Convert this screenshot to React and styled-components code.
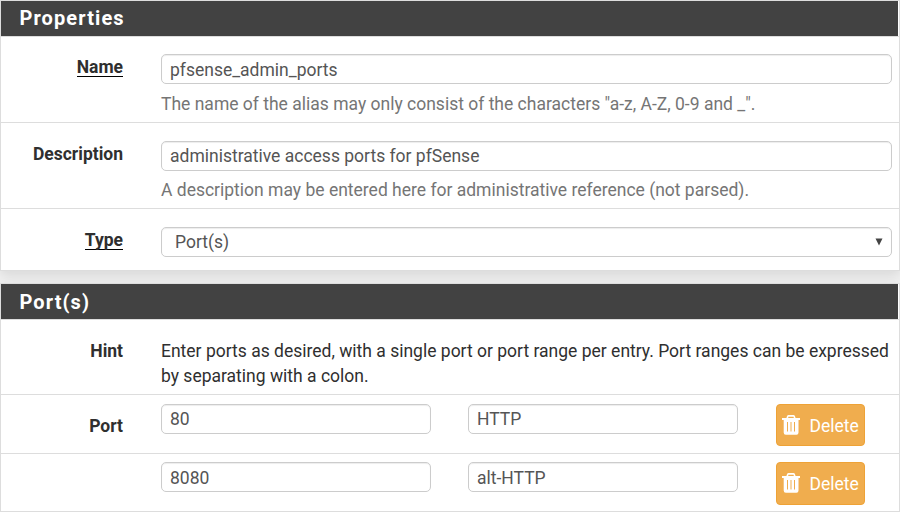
import React from "react";
import styled, { createGlobalStyle, css } from "styled-components";

const GlobalStyle = createGlobalStyle`
  *, *::before, *::after { box-sizing: border-box; }
  body {
    margin: 0;
    background: #f1f1f1;
    overflow: hidden;
    color: #2f2f2f;
    font: 400 17.5px/25px Roboto, sans-serif;
  }
`;

const Page = styled.main`
  display: flex;
  flex-direction: column;
  gap: 12px;
  width: 900px;
  height: 512px;
`;

const Panel = styled.section`
  border: 1px solid #ddd;
  background: #fff;
  box-shadow: 0 5px 12px rgba(0, 0, 0, 0.1);
`;

const PanelHeading = styled.h2`
  height: 35px;
  margin: 0 1px 0 0;
  padding-left: 18.5px;
  background: #424242;
  color: #fff;
  font-size: 20px;
  font-weight: 700;
  line-height: ${(p) => (p.$lowered ? 37 : 35)}px;
  letter-spacing: 1.1px;
`;

const Row = styled.div`
  display: grid;
  grid-template-columns: 122px 731px;
  column-gap: 38px;
  align-items: start;
  height: ${(p) => p.$height}px;
  padding-top: ${(p) => p.$top}px;
  border-top: 1px solid #ddd;
`;

const Label = styled.label`
  justify-self: end;
  margin-top: ${(p) => p.$offset ?? 1}px;
  font-weight: 700;
  line-height: 25px;
`;

const Required = styled.span`
  display: block;
  height: 22px;
  border-bottom: 1px solid #000;
`;

const fieldBox = css`
  display: block;
  width: 100%;
  height: 30px;
  border: 1px solid #ccc;
  border-radius: 5px;
  background: #fff;
  color: #555;
  box-shadow: inset 0 1px 1px rgba(0, 0, 0, 0.075);
  font: 400 17.5px/28px Roboto, sans-serif;
`;

const Input = styled.input`
  ${fieldBox}
  padding: ${(p) => (p.$raised ? 0 : 2)}px 8px 0;
  outline: none;
`;

const SelectBox = styled.div`
  ${fieldBox}
  display: flex;
  align-items: center;
  justify-content: space-between;
  padding: 0 8px 0 13px;
`;

const Help = styled.p`
  margin: ${(p) => (p.$raised ? 7 : 8)}px 0 0;
  color: #757575;
`;

const Hint = styled.p`
  margin: 1px 0 0;
`;

const EntryFields = styled.div`
  display: grid;
  grid-template-columns: 270px 270px 89px;
  column-gap: 37px;
  align-items: start;
`;

const DeleteButton = styled.button`
  display: flex;
  align-items: center;
  gap: 9.5px;
  width: 89px;
  height: ${(p) => p.$height}px;
  margin-left: 1px;
  padding: 0 0 ${(p) => p.$height - 42}px 5px;
  border: 1px solid #eea236;
  border-radius: 4px;
  background: #f0ad4e;
  color: #fff;
  font: 400 17.5px/25px Roboto, sans-serif;
`;

const ButtonText = styled.span`
  padding-top: 2px;
`;

const TrashIcon = () => (
  <svg width="18" height="20" viewBox="0 0 18 20" fill="none" aria-hidden="true">
    <path d="M5.2 3.2L5.8 1.3Q6 .9 6.500 .9H11.500Q12 .9 12.200 1.300L12.800 3.200" stroke="#fff" strokeWidth="1.600" />
    <path
      fill="#fff"
      fillRule="evenodd"
      d="M0 3H18V5H16.500V17.500Q16.500 19.700 14.500 19.700H3.800Q1.700 19.700 1.700 17.500V5H0ZM5 7V16.500H6V7ZM8.500 7V16.500H9.500V7ZM12 7V16.500H13V7Z"
    />
  </svg>
);

const Caret = () => (
  <svg width="8" height="8" viewBox="0 0 8 8" aria-hidden="true">
    <path d="M0.500 0.500H7.500L4 7.500Z" fill="#444" />
  </svg>
);

const ports = [
  { label: "Port", port: "80", note: "HTTP", height: 59, top: 9, button: 42, raised: true },
  { label: "", port: "8080", note: "alt-HTTP", height: 58, top: 8, button: 43, raised: false },
];

export default function App() {
  return (
    <>
      <GlobalStyle />
      <Page>
        <Panel>
          <PanelHeading>Properties</PanelHeading>
          <Row $height={86} $top={17}>
            <Label><Required>Name</Required></Label>
            <div>
              <Input defaultValue="pfsense_admin_ports" />
              <Help>The name of the alias may only consist of the characters "a-z, A-Z, 0-9 and _".</Help>
            </div>
          </Row>
          <Row $height={86} $top={18}>
            <Label>Description</Label>
            <div>
              <Input $raised defaultValue="administrative access ports for pfSense" />
              <Help $raised>A description may be entered here for administrative reference (not parsed).</Help>
            </div>
          </Row>
          <Row $height={62} $top={18}>
            <Label><Required>Type</Required></Label>
            <SelectBox>Port(s)<Caret /></SelectBox>
          </Row>
        </Panel>
        <Panel>
          <PanelHeading $lowered>Port(s)</PanelHeading>
          <Row $height={75} $top={18}>
            <Label>Hint</Label>
            <Hint>
              Enter ports as desired, with a single port or port range per entry. Port ranges can be expressed by separating with a colon.
            </Hint>
          </Row>
          {ports.map((p) => (
            <Row key={p.port} $height={p.height} $top={p.top}>
              <Label $offset={10}>{p.label}</Label>
              <EntryFields>
                <Input $raised={p.raised} defaultValue={p.port} />
                <Input $raised={p.raised} defaultValue={p.note} />
                <DeleteButton $height={p.button}>
                  <TrashIcon />
                  <ButtonText>Delete</ButtonText>
                </DeleteButton>
              </EntryFields>
            </Row>
          ))}
        </Panel>
      </Page>
    </>
  );
}
